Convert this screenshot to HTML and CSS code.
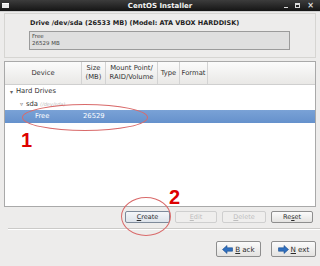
FILE: index.html
```html
<!DOCTYPE html>
<html>
<head>
<meta charset="utf-8">
<link rel="stylesheet" href="styles.css">
</head>
<body>
<div class="window">
  <div class="titlebar">
    <span class="winicon"></span>
    <span class="title">CentOS Installer</span>
    <span class="controls">
      <span class="ctl-min"></span>
      <span class="ctl-max"></span>
      <span class="ctl-close">×</span>
    </span>
  </div>
  <div class="content">
    <div class="drivepanel">
      <div class="drivetitle">Drive /dev/sda (26533 MB) (Model: ATA VBOX HARDDISK)</div>
      <div class="freebox">
        <div>Free</div>
        <div>26529 MB</div>
      </div>
    </div>
    <div class="tree">
      <div class="thead">
        <div class="th c-dev">Device</div>
        <div class="th c-size">Size<br>(MB)</div>
        <div class="th c-mount">Mount Point/<br>RAID/Volume</div>
        <div class="th c-type">Type</div>
        <div class="th c-fmt">Format</div>
      </div>
      <div class="row r1"><span class="exp">▾</span>Hard Drives</div>
      <div class="row r2"><span class="exp">▿</span>sda <span class="dim">(/dev/sda)</span></div>
      <div class="row r3 sel"><span class="freename">Free</span><span class="freesize">26529</span></div>
    </div>
    <div class="actions">
      <button class="btn b-create"><u>C</u>reate</button>
      <button class="btn b-edit dis"><u>E</u>dit</button>
      <button class="btn b-del dis"><u>D</u>elete</button>
      <button class="btn b-reset">Re<u>s</u>et</button>
    </div>
    <div class="sep"></div>
    <div class="nav">
      <button class="btn nbtn"><svg width="11" height="9" viewBox="0 0 11 9"><path d="M0.5 4.5 L5 0.5 V2.8 H10.5 V6.2 H5 V8.5 Z" fill="#2f6fbf" stroke="#1d4f8f" stroke-width="0.6"/></svg><u>B</u>ack</button>
      <button class="btn nbtn"><svg width="11" height="9" viewBox="0 0 11 9"><path d="M10.5 4.5 L6 0.5 V2.8 H0.5 V6.2 H6 V8.5 Z" fill="#2f6fbf" stroke="#1d4f8f" stroke-width="0.6"/></svg><u>N</u>ext</button>
    </div>
  </div>
  <div class="ann ellipse1"></div>
  <div class="ann num1">1</div>
  <div class="ann ellipse2"></div>
  <div class="ann num2">2</div>
</div>
</body>
</html>
```
FILE: styles.css
```css
* { box-sizing: border-box; }
html, body { margin: 0; padding: 0; }
body {
  width: 320px; height: 266px; overflow: hidden;
  background: #edeceb;
  font-family: "DejaVu Sans", sans-serif;
  font-size: 7px;
  color: #2e2e2e;
}
.window { position: relative; width: 320px; height: 266px; }
.titlebar {
  height: 12px;
  background: linear-gradient(#3c3c3c, #151515);
  display: flex; align-items: center;
  position: relative;
  border-bottom: 1px solid #cfcfcf;
}
.winicon {
  width: 7px; height: 5px; margin-left: 2px;
  background: #e8e8e8; border-top: 1px solid #fff;
}
.title {
  position: absolute; left: 0; right: 0; text-align: center;
  color: #f2f2f2; font-weight: bold; font-size: 7px;
}
.controls { margin-left: auto; display: flex; align-items: center; gap: 7px; margin-right: 6px; }
.ctl-min { width: 4px; height: 1px; background: #ddd; margin-top: 4px; }
.ctl-max { width: 5px; height: 5px; border: 1px solid #ddd; border-top-width: 2px; }
.ctl-close { color: #ddd; font-size: 8px; line-height: 6px; font-weight: bold; }
.content { padding: 0 4px; }
.drivepanel {
  margin-top: 1px;
  height: 45px;
  border: 1px solid #d6d5d2;
  padding: 5px 25px 0 24px;
}
.drivetitle { font-weight: bold; font-size: 6.5px; line-height: 9px; color: #1e1e1e; padding-left: 1px; }
.freebox {
  margin-top: 3px;
  height: 19px;
  background: #dfdfdf;
  border: 1px solid #9b9b9b;
  font-size: 5.5px; line-height: 7px;
  padding: 1px 2px;
  color: #444;
}
.tree {
  margin-top: 3px;
  height: 146px;
  background: #fff;
  border: 1px solid #a9a9a9;
}
.thead {
  display: flex; height: 23px;
  background: linear-gradient(#fbfbfb, #e9e8e6);
  border-bottom: 1px solid #cfcfcf;
}
.th {
  display: flex; align-items: center; justify-content: center; text-align: center;
  font-size: 6.8px; line-height: 9px; color: #333;
  border-right: 1px solid #d3d3d3;
}
.c-dev { width: 77px; }
.c-size { width: 24px; }
.c-mount { width: 52px; }
.c-type { width: 22px; }
.c-fmt { width: 28px; }
.row { height: 12.5px; display: flex; align-items: center; font-size: 6.8px; color: #333; }
.exp { color: #666; font-size: 6px; width: 9px; text-align: center; display: inline-block; }
.r1 { padding-left: 2px; }
.r2 { padding-left: 12px; }
.dim { color: #c0c0c0; font-size: 5px; font-style: italic; margin-left: 2px; }
.sel { background: linear-gradient(#7aa2d6, #6591cc); color: #fff; }
.freename { margin-left: 30px; width: 48px; }
.actions {
  display: flex; justify-content: flex-end; gap: 5px;
  margin-top: 4px; padding-right: 3px;
}
.btn {
  font-family: "DejaVu Sans", sans-serif;
  font-size: 6.5px; color: #2b2b2b;
  height: 12px; padding: 0; margin: 0;
  border: 1px solid #8e8e8e; border-radius: 2px;
  background: linear-gradient(#fbfbfb, #e4e3e1);
  display: flex; align-items: center; justify-content: center;
}
.btn u { text-decoration-thickness: 0.5px; text-underline-offset: 1px; }
.b-create { width: 45px; border-color: #7e8a9a; background: linear-gradient(#f4f6f9, #dde3ea); }
.b-edit { width: 42px; }
.b-del { width: 44px; }
.b-reset { width: 42px; }
.dis { color: #bdbdbd; border-color: #cfcfcf; background: #efeeed; }
.sep { margin-top: 5px; margin-left: 4px; margin-right: -4px; height: 2px; border-top: 1px solid #cbcac8; border-bottom: 1px solid #fff; }
.nav { display: flex; justify-content: flex-end; gap: 10px; margin-top: 11px; }
.nbtn { width: 45px; height: 16px; gap: 2px; font-size: 7.2px; }
.nbtn svg { display: block; }
.ann { position: absolute; }
.ellipse1 {
  left: 22px; top: 104px; width: 126px; height: 27px;
  border: 1px solid #d96a6a; border-radius: 50%;
}
.ellipse2 {
  left: 121px; top: 197px; width: 50px; height: 39px;
  border: 1px solid #d96a6a; border-radius: 50%;
}
.num1, .num2 {
  color: #dd0000; font-family: "Liberation Sans", sans-serif; font-weight: bold;
  font-size: 20px; line-height: 20px;
}
.num1 { left: 21px; top: 130px; }
.num2 { left: 169px; top: 187px; }
```
